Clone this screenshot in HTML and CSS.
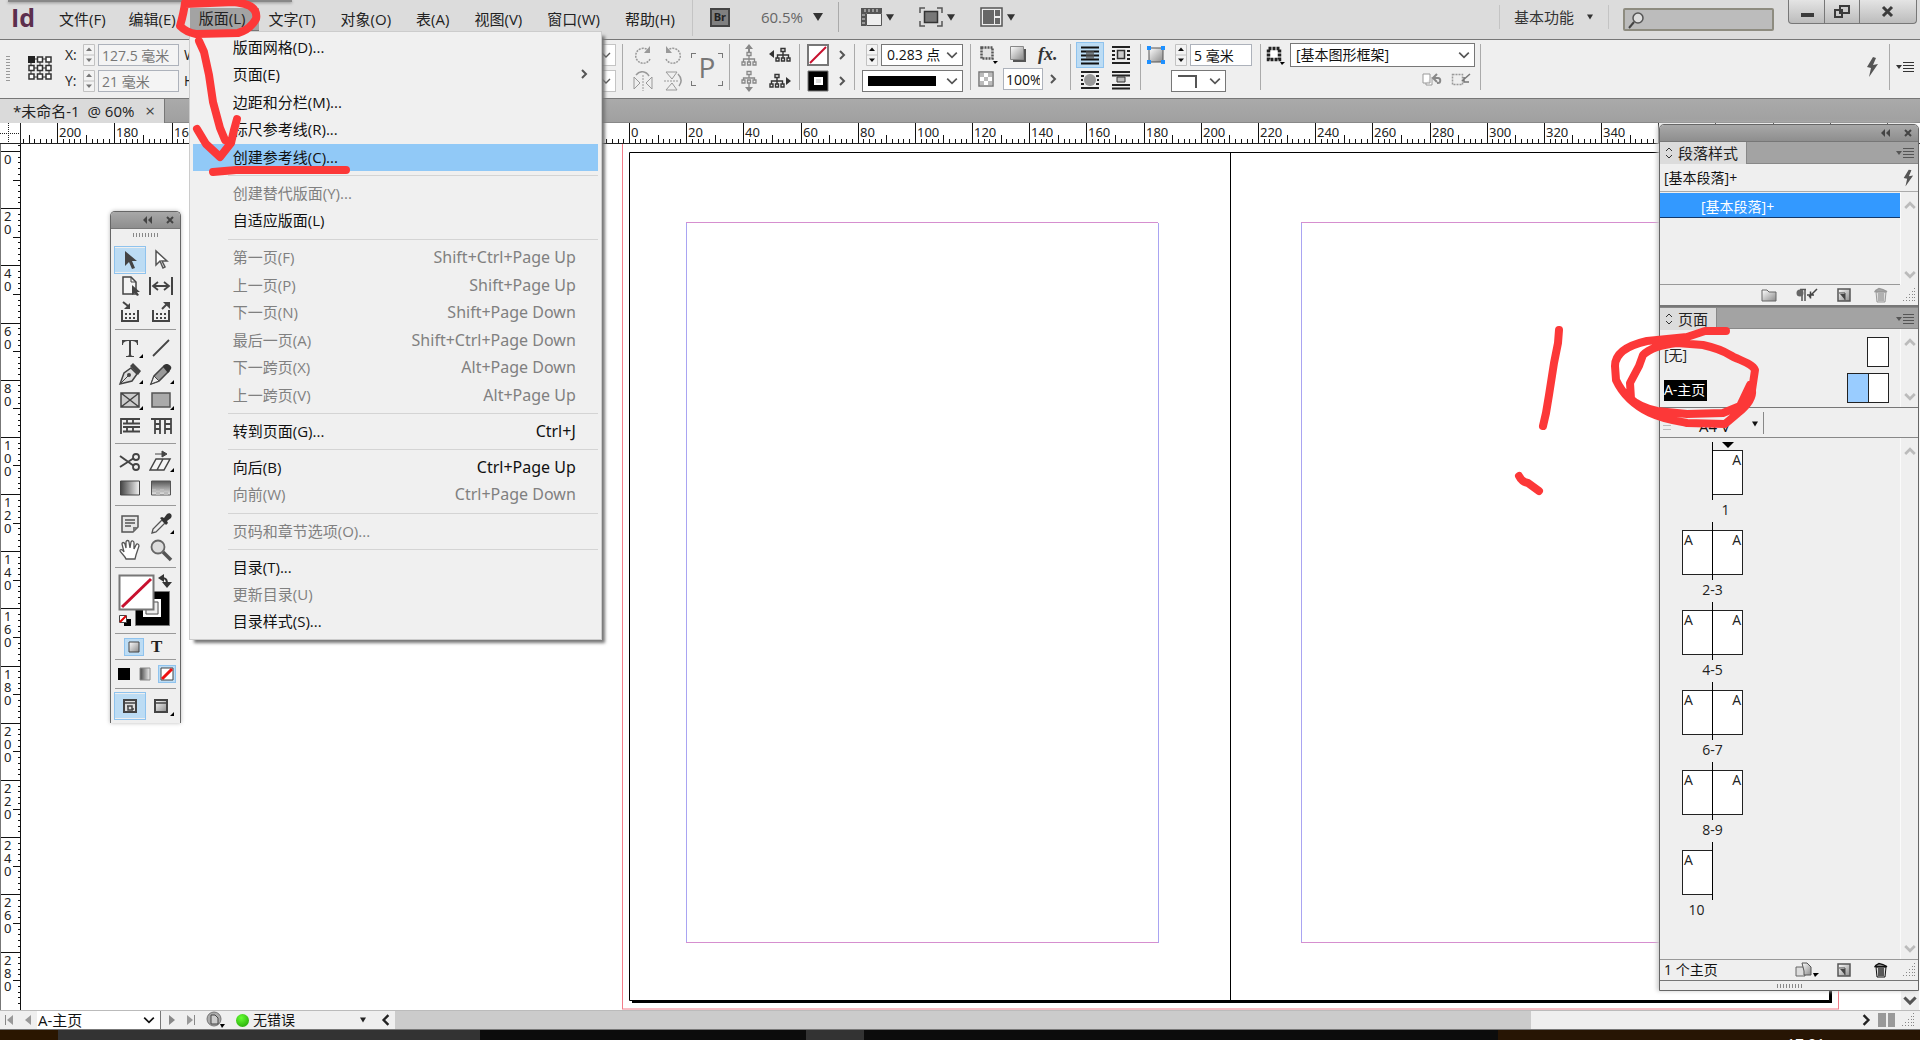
FILE: index.html
```html
<!DOCTYPE html>
<html lang="zh-CN">
<head>
<meta charset="utf-8">
<title>未命名-1 @ 60%</title>
<link rel="stylesheet" href="styles.css">
</head>
<body>
<svg class="defs" aria-hidden="true">
  <defs>
    <linearGradient id="g-h"><stop offset="0" stop-color="#444"/><stop offset="1" stop-color="#f4f4f4"/></linearGradient>
    <linearGradient id="g-v" x2="0" y2="1"><stop offset="0" stop-color="#555"/><stop offset="1" stop-color="#e8e8e8"/></linearGradient>
    <linearGradient id="g-d" x2="1" y2="1"><stop offset="0" stop-color="#fff"/><stop offset="1" stop-color="#8a8a8a"/></linearGradient>
    <symbol id="chev" viewBox="0 0 10 10"><path d="M1 3l4 4 4-4" fill="none" stroke="currentColor" stroke-width="1.4"/></symbol>
    <symbol id="chev-b" viewBox="0 0 10 10"><path d="M1 2.500l4 4 4-4" fill="none" stroke="currentColor" stroke-width="2.200"/></symbol>
    <symbol id="chev-r" viewBox="0 0 10 10"><path d="M3 1l4 4-4 4" fill="none" stroke="currentColor" stroke-width="2"/></symbol>
    <symbol id="tri" viewBox="0 0 10 10"><path d="M0 1h10L5 9z" fill="currentColor"/></symbol>
    <symbol id="pmenu" viewBox="0 0 18 12"><path d="M0 4h6L3 8z" fill="currentColor"/><path d="M7 1.500h11M7 4.500h11M7 7.500h11M7 10.500h11" stroke="currentColor"/></symbol>
    <symbol id="spin" viewBox="0 0 12 22"><path d="M.5.5h11v21H.5zM.5 11h11" fill="#f3f3f3" stroke="#c2c2c2"/><path d="M3 7h6L6 3.500zM3 14.500h6L6 18z" fill="currentColor"/></symbol>
    <symbol id="bolt" viewBox="0 0 14 20"><path d="M8 0L2 10l4 1-2 9 9-13-5 1 3-7z" fill="#555"/></symbol>
    <symbol id="corner" viewBox="0 0 14 14"><g fill="#888"><path d="M12 0h1v1h-1zM10 3h1v1h-1zM12 3h1v1h-1zM7 6h1v1H7zM10 6h1v1h-1zM12 6h1v1h-1zM4 9h1v1H4zM7 9h1v1H7zM10 9h1v1h-1zM12 9h1v1h-1zM1 12h1v1H1zM4 12h1v1H4zM7 12h1v1H7zM10 12h1v1h-1zM12 12h1v1h-1z"/></g></symbol>
    <symbol id="newpg" viewBox="0 0 14 14"><path d="M1 1h12v12H1z" fill="url(#g-d)" stroke="#555" stroke-width="1.500"/><path d="M2 5h6v7" fill="#f4f4f4" stroke="#444"/><path d="M3 6l5 6V6z" fill="#444"/></symbol>
    <symbol id="trash" viewBox="0 0 14 16"><path d="M2 5h10l-1 10H3z" fill="#ddd" stroke="currentColor"/><path d="M1 4.500c1-2 3-2 4-3l4 1 4 2zM5 6v8M7 6v8M9 6v8" fill="#aaa" stroke="currentColor" stroke-width="1.300"/></symbol>
    <symbol id="tree-v" viewBox="0 0 16 22"><path d="M8 0l4 5H4zM7 5h2v4H7z" fill="currentColor"/><path d="M6 8.500h4v3H6zM8 12v3M2.500 18v-3h11v3M8 15v3M1 18h3v3H1zM6.500 18h3v3h-3zM12 18h3v3h-3z" fill="none" stroke="currentColor" stroke-width="1.300"/></symbol>
    <symbol id="tree-h" viewBox="0 0 22 16"><path d="M0 7l5-4v8z" fill="currentColor"/><path d="M12 1.500h4v3h-4zM14 5v3M8.500 11V8h11v3M14 8v3M7 11h3v3H7zM12.500 11h3v3h-3zM18 11h3v3h-3z" fill="none" stroke="currentColor" stroke-width="1.400"/></symbol>
    <symbol id="i-frame" viewBox="0 0 20 20"><path d="M3.500 3.500h11v11h-11z" fill="#e4e4e4" stroke="#555" stroke-width="2.500" stroke-dasharray="2 1"/><path d="M15 17h5l-3 3z" fill="#000"/></symbol>
  </defs>
</svg>

<header class="menubar">
  <div class="peek"></div>
  <span class="logo">Id</span>
  <nav class="menus">
    <div class="menu"><button>文件(F)</button></div>
    <div class="menu"><button>编辑(E)</button></div>
    <div class="menu"><button class="open">版面(L)</button>
      <ul class="dropdown">
        <li><button>版面网格(D)...</button></li>
        <li><button>页面(E)<svg class="s10 sub"><use href="#chev-r"/></svg></button></li>
        <li><button>边距和分栏(M)...</button></li>
        <li><button>标尺参考线(R)...</button></li>
        <li><button class="hot">创建参考线(C)...</button></li>
        <li class="sep"></li>
        <li><button disabled>创建替代版面(Y)...</button></li>
        <li><button>自适应版面(L)</button></li>
        <li class="sep"></li>
        <li><button disabled>第一页(F)<kbd>Shift+Ctrl+Page Up</kbd></button></li>
        <li><button disabled>上一页(P)<kbd>Shift+Page Up</kbd></button></li>
        <li><button disabled>下一页(N)<kbd>Shift+Page Down</kbd></button></li>
        <li><button disabled>最后一页(A)<kbd>Shift+Ctrl+Page Down</kbd></button></li>
        <li><button disabled>下一跨页(X)<kbd>Alt+Page Down</kbd></button></li>
        <li><button disabled>上一跨页(V)<kbd>Alt+Page Up</kbd></button></li>
        <li class="sep"></li>
        <li><button>转到页面(G)...<kbd>Ctrl+J</kbd></button></li>
        <li class="sep"></li>
        <li><button>向后(B)<kbd>Ctrl+Page Up</kbd></button></li>
        <li><button disabled>向前(W)<kbd>Ctrl+Page Down</kbd></button></li>
        <li class="sep"></li>
        <li><button disabled>页码和章节选项(O)...</button></li>
        <li class="sep"></li>
        <li><button>目录(T)...</button></li>
        <li><button disabled>更新目录(U)</button></li>
        <li><button>目录样式(S)...</button></li>
      </ul>
    </div>
    <div class="menu"><button>文字(T)</button></div>
    <div class="menu"><button>对象(O)</button></div>
    <div class="menu"><button>表(A)</button></div>
    <div class="menu"><button>视图(V)</button></div>
    <div class="menu"><button>窗口(W)</button></div>
    <div class="menu"><button>帮助(H)</button></div>
  </nav>
  <div class="appbar">
    <button class="bridge">Br</button>
    <button class="zoom">60.5%<svg class="s10"><use href="#tri"/></svg></button>
    <span class="vsep"></span>
    <button class="view" aria-label="视图选项"><svg width="22" height="20"><path d="M1 1h21v5H6v13H1z" fill="#555"/><path d="M5 2v3M9 2v3M13 2v3M17 2v3M2 8h3M2 12h3M2 16h3" stroke="#ddd"/><path d="M6.500 6.500h15v12h-15z" fill="#eee" stroke="#555"/></svg><svg class="s8"><use href="#tri"/></svg></button>
    <button class="view" aria-label="屏幕模式"><svg width="24" height="20"><path d="M1 6V1h5M18 1h5v5M23 14v5h-5M6 19H1v-5" fill="none" stroke="#555" stroke-width="1.500"/><path d="M5.500 4.500h13v11h-13z" fill="#777" stroke="#333" stroke-width="1.500"/></svg><svg class="s8"><use href="#tri"/></svg></button>
    <button class="view" aria-label="排列文档"><svg width="23" height="20"><path d="M1 1h21v18H1z" fill="#eee" stroke="#555" stroke-width="1.500"/><path d="M3 3h11v14H3zM15 3h5v6h-5zM15 11h5v6h-5z" fill="#666"/></svg><svg class="s8"><use href="#tri"/></svg></button>
  </div>
  <div class="right">
    <button class="workspace-pick">基本功能<svg class="s6"><use href="#tri"/></svg></button>
    <div class="search"><svg width="18" height="18"><circle cx="11" cy="7" r="5" fill="#ddd" stroke="#555" stroke-width="1.500"/><path d="M7 11l-5 6" stroke="#444" stroke-width="2"/></svg><input type="search" aria-label="搜索"></div>
    <div class="winbtns">
      <button aria-label="最小化"><svg width="14" height="14"><path d="M1 8h13v4H1z" fill="#3b3b3b"/></svg></button>
      <button aria-label="还原"><svg width="16" height="14"><path d="M6 1h9v7H6zM1 5h7v7H1z" fill="#ccc" stroke="#3b3b3b" stroke-width="2"/></svg></button>
      <button aria-label="关闭"><svg width="14" height="14"><path d="M2 2l9 9M11 2l-9 9" stroke="#3b3b3b" stroke-width="3"/></svg></button>
    </div>
  </div>
</header>

<section class="control">
  <div class="grip-v"></div>
  <svg class="refpt" width="24" height="24"><path d="M3 3h18v18H3zM12 3v18M3 12h18" fill="none" stroke="#333"/><g fill="#fff" stroke="#333" stroke-width="1.500"><path d="M9.500 1h5v5h-5zM18 1h5v5h-5zM1 9.500h5v5H1zM9.500 9.500h5v5h-5zM18 9.500h5v5h-5zM1 18h5v5H1zM9.500 18h5v5h-5zM18 18h5v5h-5z"/></g><path d="M0 0h7v7H0z" fill="#222"/></svg>
  <div class="rows xy">
    <div class="row"><label for="fx">X:</label><svg class="spin dim"><use href="#spin"/></svg><input id="fx" class="dim" value="127.5 毫米"></div>
    <div class="row"><label for="fy">Y:</label><svg class="spin dim"><use href="#spin"/></svg><input id="fy" class="dim" value="21 毫米"></div>
  </div>
  <div class="rows wh">
    <div class="row"><span>W:</span><button class="combo dim" aria-label="X 缩放"><svg class="s10"><use href="#chev"/></svg></button></div>
    <div class="row"><span>H:</span><button class="combo dim" aria-label="Y 缩放"><svg class="s10"><use href="#chev"/></svg></button></div>
  </div>
  <div class="group rot">
    <div class="rows">
      <div class="row"><svg width="20" height="20"><path d="M17 14A7.500 7.500 0 1 1 15 5" fill="none" stroke="#999" stroke-width="1.500" stroke-dasharray="2 1"/><path d="M17 1v7h-6z" fill="#999"/></svg><svg width="20" height="20"><path d="M3 14A7.500 7.500 0 1 0 5 5" fill="none" stroke="#999" stroke-width="1.500" stroke-dasharray="2 1"/><path d="M3 1v7h6z" fill="#999"/></svg></div>
      <div class="row"><svg width="20" height="20"><path d="M1 6l6 6-6 6zM19 6l-6 6 6 6z" fill="none" stroke="#999"/><path d="M10 4v16" stroke="#999" stroke-dasharray="2 1"/><path d="M3 4c4-5 10-4 13 1" fill="none" stroke="#999" stroke-width="1.500"/></svg><svg width="20" height="20"><path d="M3 1h11L9 8zM3 19h11L9 12z" fill="none" stroke="#999"/><path d="M1 10h15" stroke="#999" stroke-dasharray="2 1"/><path d="M15 3c4 4 4 8 1 12" fill="none" stroke="#999" stroke-width="1.500"/></svg></div>
    </div>
    <span class="pmark">P</span>
  </div>
  <div class="group tree rows">
    <div class="row"><svg class="gray" width="16" height="22"><use href="#tree-v"/></svg><svg width="22" height="16"><use href="#tree-h"/></svg></div>
    <div class="row"><svg class="gray" width="16" height="22"><path d="M8 22l4-5H4z" fill="#888"/><path d="M6 1.500h4v3H6zM8 5v3M2.500 10V8h11v2M1 10h3v3H1zM6.500 10h3v3h-3zM12 10h3v3h-3zM8 13v4" fill="none" stroke="#888" stroke-width="1.300"/></svg><svg width="22" height="16"><path d="M22 8l-5-4v8z" fill="#333"/><path d="M6 1.500h4v3H6zM8 5v3M2.500 11V8h11v3M8 8v3M1 11h3v3H1zM6.500 11h3v3h-3zM12 11h3v3h-3z" fill="none" stroke="#333" stroke-width="1.400"/></svg></div>
  </div>
  <div class="group paint rows">
    <div class="row"><svg width="22" height="22"><path d="M1 1h20v20H1z" fill="#fff" stroke="#777" stroke-width="2"/><path d="M3 19L19 3" stroke="#c8102e" stroke-width="2"/></svg><svg class="s10"><use href="#chev-r"/></svg></div>
    <div class="row"><svg width="22" height="22"><path d="M1 1h20v20H1z" stroke="#777" stroke-width="1"/><path d="M8 8h7v6H8z" fill="#ddd" stroke="#fff" stroke-width="2"/></svg><svg class="s10"><use href="#chev-r"/></svg></div>
  </div>
  <div class="group weight rows">
    <div class="row end"><svg class="spin"><use href="#spin"/></svg><button class="combo w82">0.283 点<svg class="s12"><use href="#chev"/></svg></button></div>
    <div class="row end"><button class="combo w100" aria-label="描边类型"><span class="stroke-bar"></span><svg class="s12"><use href="#chev"/></svg></button></div>
  </div>
  <div class="group fxs rows">
    <div class="row"><svg width="20" height="20"><use href="#i-frame"/></svg><svg width="18" height="18"><path d="M4 4h13v13H4z" fill="#555"/><path d="M1.500 1.500h13v13h-13z" fill="url(#g-d)" stroke="#888"/></svg><span class="fx">fx.</span></div>
    <div class="row"><svg width="16" height="16"><path d="M1 1h14v14H1z" fill="#fff" stroke="#777" stroke-width="1.500"/><path d="M2 2h4v4H2zM10 2h4v4h-4zM6 6h4v4H6zM2 10h4v4H2zM10 10h4v4h-4z" fill="#bbb"/></svg><input class="w40" aria-label="不透明度" value="100%"><svg class="s10"><use href="#chev-r"/></svg></div>
  </div>
  <div class="group wrap rows">
    <div class="row"><svg class="on" width="26" height="24"><path d="M4 4.500h18M4 8.500h18M4 12.500h18M4 16.500h18M4 20.500h18" stroke="#111" stroke-width="2"/><path d="M9 8h8v8H9z" fill="#555" opacity=".7"/></svg><svg width="20" height="20"><path d="M1 2h18M1 18h18M1 6h3M1 10h3M1 14h3M16 6h3M16 10h3M16 14h3" stroke="#222" stroke-width="2"/><path d="M6.500 5.500h7v8h-7z" fill="#ccc" stroke="#333" stroke-width="1.500"/></svg></div>
    <div class="row"><svg width="26" height="20"><path d="M4 2h18M4 18h18M4 6h3M4 10h2M4 14h3M19 6h3M20 10h2M19 14h3" stroke="#222" stroke-width="2"/><circle cx="13" cy="10" r="6" fill="#999"/></svg><svg width="20" height="20"><path d="M1 2h18M1 5.500h18M1 15h18M1 18.500h18" stroke="#222" stroke-width="2"/><path d="M6 7h8v5H6z" fill="#bbb" stroke="#333"/></svg></div>
  </div>
  <div class="group corners rows">
    <div class="row"><svg width="20" height="20"><path d="M3 3h14v14H3z" fill="url(#g-d)" stroke="#555"/><path d="M1 1h4v4H1zM15 1h4v4h-4zM1 15h4v4H1zM15 15h4v4h-4z" fill="#1e90ff"/></svg><svg class="spin"><use href="#spin"/></svg><input class="w62" aria-label="转角大小" value="5 毫米"></div>
    <div class="row"><button class="combo w54" aria-label="转角形状"><svg width="20" height="14"><path d="M0 2h18v12" fill="none" stroke="#555" stroke-width="2"/></svg><svg class="s12"><use href="#chev"/></svg></button></div>
  </div>
  <div class="group style rows">
    <div class="row"><svg width="20" height="20"><path d="M3.500 3.500h11v11h-11z" fill="#fff" stroke="#222" stroke-width="3.500" stroke-dasharray="3 1"/><path d="M15 17h5l-3 3z"/></svg><button class="combo w186">[基本图形框架]<svg class="s12"><use href="#chev"/></svg></button></div>
    <div class="row end"><svg width="20" height="16"><path d="M1 2h7v9H1zM4 11v2h6V5" fill="#fff" stroke="#999"/><path d="M12 6h4c3 0 3 5 0 5h-1M15 2l-4 4 4 4" fill="none" stroke="#888" stroke-width="2"/></svg><svg width="20" height="16"><path d="M1.500 2.500h10v10h-10z" fill="#eee" stroke="#999" stroke-dasharray="2 1" stroke-width="1.500"/><path d="M19 2l-8 7M13 5v5h5" stroke="#777" stroke-width="1.500" fill="none"/></svg></div>
  </div>
  <div class="group tail"><svg width="14" height="20"><use href="#bolt"/></svg><span class="vsep"></span><button aria-label="面板菜单"><svg width="18" height="12"><use href="#pmenu"/></svg></button></div>
</section>

<div class="tabs"><div class="tab">*未命名-1 &nbsp;@ 60%<button aria-label="关闭标签">×</button></div></div>

<main class="workspace">
  <svg class="origin" width="21" height="20"><path d="M0 10.500h21M8.500 0v20" stroke="#222" stroke-dasharray="1 1"/></svg>
  <svg class="ruler-h" id="rh"></svg>
  <svg class="ruler-v" id="rv"></svg>
  <div class="canvas">
    <svg class="spread">
      <rect x="601.500" y="-2" width="1216" height="867" fill="none" stroke="#f27b88"/>
      <path d="M611 11h1200v848H611z"/>
      <path d="M608.500 8.500h1200v848h-1200z" fill="#fff" stroke="#000"/>
      <path d="M1209.500 8v848" stroke="#000"/>
      <path d="M665.500 79v720M1137.500 79v720M1280.500 79v720" stroke="#a9a4f2"/>
      <path d="M665 78.500h472M665 798.500h472M1280 78.500h472M1280 798.500h472" stroke="#d68fcf"/>
    </svg>
    <div class="vscroll"><svg class="s14"><use href="#chev-b"/></svg></div>
  </div>
</main>

<footer class="status">
  <button aria-label="首页"><svg width="10" height="12"><path d="M1.500 1v10" stroke="#888"/><path d="M9 1v10L3 6z" fill="#999"/></svg></button>
  <button aria-label="上一页"><svg width="8" height="12"><path d="M7 1v10L1 6z" fill="#999"/></svg></button>
  <button class="page-pick">A-主页<svg class="s12"><use href="#chev"/></svg></button>
  <button aria-label="下一页"><svg width="8" height="12"><path d="M1 1v10l6-5z" fill="#888"/></svg></button>
  <button aria-label="末页"><svg width="10" height="12"><path d="M8.500 1v10" stroke="#888"/><path d="M1 1v10l6-5z" fill="#999"/></svg></button>
  <button aria-label="打开"><svg width="20" height="18"><circle cx="8" cy="8" r="7" fill="#aaa" stroke="#777"/><path d="M5 4h4l3 3v6H5z" fill="#ccc" stroke="#444"/><path d="M14 13h5l-3 4z"/></svg></button>
  <span class="preflight"><i></i>无错误</span>
  <button class="pf" aria-label="印前检查菜单"><svg class="s6"><use href="#tri"/></svg></button>
  <button aria-label="向左滚动"><svg class="s12 flip"><use href="#chev-r"/></svg></button>
  <div class="hscroll"><div class="thumb"></div></div>
  <button aria-label="向右滚动"><svg class="s12"><use href="#chev-r"/></svg></button>
  <span class="split"></span>
  <svg width="14" height="14"><use href="#corner"/></svg>
</footer>
<div class="taskbar"><span class="t1"></span><span class="t2"></span><span class="t3"></span><span class="t4"></span><span class="t5"></span><span class="t6"><time>17:01</time></span></div>

<aside class="tools">
  <div class="bar"><svg width="10" height="8"><path d="M4 0v8L0 4zM9 0v8L5 4z" fill="#444"/></svg><svg width="8" height="8"><path d="M1 1l6 6M7 1L1 7" stroke="#444" stroke-width="2"/></svg></div>
  <div class="grip-h"></div>
  <div class="grid">
    <button class="on" aria-label="选择"><svg viewBox="0 0 24 24"><path d="M7 3v15l4-4 3 7 3-1-3-7h5z" fill="#444"/></svg></button>
    <button aria-label="直接选择"><svg viewBox="0 0 24 24"><path d="M7 3v14l4-4 3 7 2-1-3-6h5z" fill="#fff" stroke="#555" stroke-width="1.500"/></svg></button>
    <button aria-label="页面"><svg viewBox="0 0 24 24"><path d="M5 3h8l5 5v12H5z" fill="#f4f4f4" stroke="#444" stroke-width="1.500"/><path d="M13 3v5h5" fill="none" stroke="#444"/><path d="M14 11v10l3-2 2 3 2-1-2-3h3z" fill="#444"/></svg></button>
    <button aria-label="间隙"><svg viewBox="0 0 24 24"><path d="M1 3v18M23 3v18" stroke="#444" stroke-width="2"/><path d="M4 12h16M9 8l-5 4 5 4M15 8l5 4-5 4" fill="none" stroke="#444" stroke-width="1.800"/></svg></button>
    <button aria-label="内容收集器"><svg viewBox="0 0 24 24"><path d="M4 10v11h16V10" fill="none" stroke="#444" stroke-width="2"/><path d="M7 14h10M7 18h10" stroke="#444" stroke-width="2" stroke-dasharray="2 2"/><path d="M5 2l5 4" stroke="#444" stroke-width="2"/><path d="M12 3v6H6z" fill="#444"/></svg></button>
    <button aria-label="内容置入器"><svg viewBox="0 0 24 24"><path d="M4 10v11h16V10" fill="none" stroke="#444" stroke-width="2"/><path d="M7 14h10M7 18h10" stroke="#444" stroke-width="2" stroke-dasharray="2 2"/><path d="M13 9l5-5" stroke="#444" stroke-width="2"/><path d="M14 2h7v7z" fill="#444"/></svg></button>
    <hr>
    <button class="more" aria-label="文字"><svg viewBox="0 0 24 24"><path d="M4 4h16v5h-1c0-3-2-4-6-4v13c0 2 1 2 3 2v1H8v-1c2 0 3 0 3-2V5C7 5 5 6 5 9H4z" fill="#444"/></svg></button>
    <button aria-label="直线"><svg viewBox="0 0 24 24"><path d="M4 20L20 4" stroke="#444" stroke-width="1.800"/></svg></button>
    <button class="more" aria-label="钢笔"><svg viewBox="0 0 24 24"><path d="M2 22l4-11 7-5 6 6-5 7z" fill="#ddd" stroke="#444" stroke-width="1.500"/><path d="M12 4l3-3 8 8-3 4z" fill="#444"/><path d="M2 22l8-8" stroke="#444"/><circle cx="11" cy="13" r="2" fill="#444"/></svg></button>
    <button class="more" aria-label="铅笔"><svg viewBox="0 0 24 24"><path d="M2 22l3-8L15 4l5 5L10 19z" fill="#999" stroke="#444" stroke-width="1.500"/><path d="M5 14l5 5-8 3z" fill="#eee" stroke="#444"/><path d="M14 5c1-6 10-2 8 2l-3 4z" fill="#333"/></svg></button>
    <button class="more" aria-label="矩形框架"><svg viewBox="0 0 24 24"><path d="M3 5h18v14H3zM3 5l18 14M21 5L3 19" fill="#ccc" stroke="#444" stroke-width="1.500"/></svg></button>
    <button class="more" aria-label="矩形"><svg viewBox="0 0 24 24"><path d="M3 5h18v14H3z" fill="#aaa" stroke="#555" stroke-width="1.500"/></svg></button>
    <button aria-label="水平网格"><svg viewBox="0 0 24 24"><path d="M3 20V5h19M5 9.500h17M5 13h17M5 17.500h17M9 5v4M15 5v4M9 13v4M15 13v4" fill="none" stroke="#444" stroke-width="1.800"/></svg></button>
    <button aria-label="垂直网格"><svg viewBox="0 0 24 24"><path d="M2 5h20v15M6 5v15M11 5v15M16 5v15M6 10h5M6 15h5M16 10h6M16 15h6" fill="none" stroke="#444" stroke-width="1.800"/></svg></button>
    <hr>
    <button aria-label="剪刀"><svg viewBox="0 0 24 24"><path d="M2 6l14 10M2 17L16 8" stroke="#444" stroke-width="2"/><circle cx="18" cy="7" r="3" fill="none" stroke="#444" stroke-width="1.800"/><circle cx="18" cy="17" r="3" fill="none" stroke="#444" stroke-width="1.800"/></svg></button>
    <button class="more" aria-label="自由变换"><svg viewBox="0 0 24 24"><path d="M1 20L7 9h14l-6 11zM8 20L14 9" fill="#f4f4f4" stroke="#444" stroke-width="1.500"/><path d="M6 4h8M13 1l5 3-5 3z" fill="#444" stroke="#444"/></svg></button>
    <button aria-label="渐变色板"><svg viewBox="0 0 24 24"><path d="M2.500 5h19v14h-19z" fill="url(#g-h)" stroke="#444"/></svg></button>
    <button aria-label="渐变羽化"><svg viewBox="0 0 24 24"><path d="M2.500 5h19v14h-19z" fill="url(#g-v)" stroke="#555"/><path d="M3 13h4v3H3zM11 13h4v3h-4zM7 16h4v3H7zM15 16h4v3h-4z" fill="#bbb"/></svg></button>
    <hr>
    <button aria-label="附注"><svg viewBox="0 0 24 24"><path d="M4 4h16v11l-5 5H4z" fill="#e6e6e6" stroke="#555" stroke-width="1.500"/><path d="M7 8h10M7 11h10M7 14h6" stroke="#555" stroke-width="1.500"/><path d="M15 20v-5h5z" fill="#777"/></svg></button>
    <button class="more" aria-label="吸管"><svg viewBox="0 0 24 24"><path d="M3 21l1-4L13 8l3 3-9 9z" fill="#eee" stroke="#555" stroke-width="1.300"/><path d="M11 6l2-1 2 1 3-4c3-2 6 1 4 4l-4 3 1 2-2 2z" fill="#333"/></svg></button>
    <button aria-label="抓手"><svg viewBox="0 0 24 24"><path d="M8 21c-1-3-4-5-6-8 0-2 2-2 4 1L4 6c0-2 2-2 3 0l1 4V4c0-2 3-2 3 0l1 6 1-6c1-2 3-1 3 1v6l2-4c1-2 3-1 3 1l-3 9-1 4z" fill="#fff" stroke="#555" stroke-width="1.300"/></svg></button>
    <button aria-label="缩放"><svg viewBox="0 0 24 24"><circle cx="9" cy="9" r="6.500" fill="#ddd" stroke="#666" stroke-width="1.800"/><path d="M14 14l8 8" stroke="#555" stroke-width="3.500"/></svg></button>
    <hr>
  </div>
  <svg class="swatch" width="56" height="60"><path d="M17.500 18.500h34v34h-34z" fill="#000" stroke="#777"/><path d="M26 27h16v16H26z" fill="#eee" stroke="#fff" stroke-width="2"/><path d="M28 29h12v12H28z" fill="#eee" stroke="#555"/><path d="M1.500 2.500h34v34h-34z" fill="#fff" stroke="#777" stroke-width="2"/><path d="M4 34L33 6" stroke="#c8102e" stroke-width="3"/><path d="M44 5c5 0 5 3 5 7" fill="none" stroke="#333" stroke-width="2"/><path d="M46 1l-6 4 6 4zM44 9h10l-5 6z" fill="#333"/><path d="M6 46h7v7H6z"/><path d="M1.500 42.500h7v7h-7z" fill="#fff" stroke="#444"/><path d="M2 49l6-6" stroke="#d00" stroke-width="2"/></svg>
  <hr>
  <div class="pair"><button class="on" aria-label="格式针对容器"><svg width="18" height="16"><path d="M4 3h10v10H4z" fill="url(#g-d)" stroke="#444"/></svg></button><button class="tt">T</button></div>
  <hr>
  <div class="pair three"><button aria-label="应用颜色"><svg width="14" height="14"><path d="M1 1h12v12H1z"/></svg></button><button aria-label="应用渐变"><svg width="14" height="14"><path d="M2 1h10v12H2z" fill="url(#g-h)" stroke="#888"/></svg></button><button class="on" aria-label="应用无"><svg width="16" height="16"><path d="M2 2h12v12H2z" fill="#fff" stroke="#444"/><path d="M3 13L13 3" stroke="#e11" stroke-width="3"/></svg></button></div>
  <hr>
  <div class="grid last"><button class="on" aria-label="正常"><svg viewBox="0 0 24 24"><path d="M6 6h12v12H6z" fill="#ddd" stroke="#444" stroke-width="2"/><path d="M6 9h12M9 12h5v3h2M15 16h-5v-4" stroke="#444" stroke-width="1.500" fill="none"/></svg></button><button class="more" aria-label="预览"><svg viewBox="0 0 24 24"><path d="M6 6h12v12H6z" fill="url(#g-d)" stroke="#444" stroke-width="2"/><path d="M6 9h12" stroke="#444" stroke-width="1.500"/></svg></button></div>
</aside>

<aside class="panels">
  <div class="bar"><svg width="10" height="8"><path d="M4 0v8L0 4zM9 0v8L5 4z" fill="#444"/></svg><svg width="8" height="8"><path d="M1 1l6 6M7 1L1 7" stroke="#444" stroke-width="2"/></svg></div>
  <div class="ptabs"><span class="ptab"><svg width="8" height="12"><path d="M1 4l3-3 3 3M1 8l3 3 3-3" fill="none" stroke="#333"/></svg>段落样式</span><svg width="18" height="12"><use href="#pmenu"/></svg></div>
  <div class="current"><span>[基本段落]+</span><svg width="12" height="18" viewBox="0 0 14 20"><use href="#bolt"/></svg></div>
  <div class="list styles"><div class="body"><button class="sel">[基本段落]+</button></div><div class="sb"><svg class="s12 up"><use href="#chev-b"/></svg><svg class="s12"><use href="#chev-b"/></svg></div></div>
  <div class="pfoot">
    <svg width="16" height="14"><path d="M1 2h5l2 2h7v9H1z" fill="url(#g-d)" stroke="#666"/></svg>
    <svg width="24" height="14"><path d="M7 2v11M10 2v11M11 1.500H5" stroke="#555" stroke-width="1.500"/><circle cx="5" cy="5" r="3.500" fill="#666"/><path d="M12 7h7M15.500 3.500v7M22 1l-8 8" stroke="#444" stroke-width="1.500"/></svg>
    <svg width="14" height="14"><use href="#newpg"/></svg>
    <svg class="gray bin" width="14" height="16"><use href="#trash"/></svg>
    <svg width="14" height="14"><use href="#corner"/></svg>
  </div>
  <div class="ptabs second"><span class="ptab"><svg width="8" height="12"><path d="M1 4l3-3 3 3M1 8l3 3 3-3" fill="none" stroke="#333"/></svg>页面</span><svg width="18" height="12"><use href="#pmenu"/></svg></div>
  <div class="list masters"><div class="body">
      <div class="master"><span>[无]</span><i class="pg"></i></div>
      <div class="master"><span class="inv">A-主页</span><i class="pg blue"></i><i class="pg"></i></div>
    </div><div class="sb"><svg class="s12 up"><use href="#chev-b"/></svg><svg class="s12"><use href="#chev-b"/></svg></div></div>
  <div class="layoutrow"><span class="lines"></span><button>A4 V<svg class="s6"><use href="#tri"/></svg></button></div>
  <div class="list pages"><div class="body">
      <figure class="first"><div class="sp"><b class="none"></b><b class="r">A</b></div><figcaption>1</figcaption></figure>
      <figure><div class="sp"><b>A</b><b class="r">A</b></div><figcaption>2-3</figcaption></figure>
      <figure><div class="sp"><b>A</b><b class="r">A</b></div><figcaption>4-5</figcaption></figure>
      <figure><div class="sp"><b>A</b><b class="r">A</b></div><figcaption>6-7</figcaption></figure>
      <figure><div class="sp"><b>A</b><b class="r">A</b></div><figcaption>8-9</figcaption></figure>
      <figure class="final"><div class="sp"><b>A</b><b class="none"></b></div><figcaption>10</figcaption></figure>
    </div><div class="sb"><svg class="s12 up"><use href="#chev-b"/></svg><svg class="s12"><use href="#chev-b"/></svg></div></div>
  <div class="pfoot bottom"><span>1 个主页</span>
    <svg width="24" height="16"><path d="M1 5h9v9H1z" fill="#ddd" stroke="#666"/><path d="M7 1h5l4 4v8H9V9z" fill="url(#g-d)" stroke="#555"/><path d="M18 11h6l-4 4z"/></svg>
    <svg width="14" height="14"><use href="#newpg"/></svg>
    <svg class="bin" width="14" height="16"><use href="#trash"/></svg>
    <svg width="14" height="14"><use href="#corner"/></svg>
  </div>
  <div class="resize"><div class="grip-h"></div></div>
</aside>

<svg class="ink" aria-hidden="true">
  <path d="M185 3C184 12 182 19 180 26C184 30 190 33 196 34L238 33C246 31 252 26 256 19C257 14 255 9 250 6C244 3 240 3 234 2L185 4"/>
  <path d="M199 41L204 52L209 75L213 102L220 128L225 140M197 129L206 144L220 157L231 143L234 130L237 119"/>
  <path d="M213 172L236 170L346 170"/>
  <path d="M1559 330L1558 343L1554 363L1549 395L1546 413L1543 426M1519 476Q1522 482 1528 483L1539 491"/>
  <path d="M1726 331L1705 331L1687 337L1647 341C1625 346 1615 355 1615 366L1616 380C1622 393 1632 404 1650 413C1665 420 1678 421 1687 423L1725 424L1738 413C1748 405 1753 398 1752 390L1755 370C1752 363 1738 360 1730 355C1722 350 1712 347 1703 345L1677 343C1660 345 1648 350 1643 355L1639 366L1630 383L1631 399C1637 405 1645 408 1657 411L1687 414L1723 413L1740 406L1750 385"/>
</svg>
<script src="rulers.js"></script>
</body>
</html>
```
FILE: rulers.js
```js
// Document rulers: 2 mm ticks, 10 mm half ticks, 20 mm labelled ticks.
const PX_PER_MM = 2.859;
const NS = 'http://www.w3.org/2000/svg';

function add(svg, x1, y1, x2, y2) {
  const p = document.createElementNS(NS, 'path');
  p.setAttribute('d', `M${x1} ${y1}L${x2} ${y2}`);
  svg.appendChild(p);
}
function label(svg, x, y, s) {
  const t = document.createElementNS(NS, 'text');
  t.setAttribute('x', x);
  t.setAttribute('y', y);
  t.textContent = s;
  svg.appendChild(t);
}

const rh = document.getElementById('rh');
const originX = 608;
for (let mm = -212; mm <= 450; mm += 2) {
  const x = Math.round(originX + mm * PX_PER_MM) + 0.5;
  if (mm % 20 === 0) {
    add(rh, x, 0, x, 20);
    // labels between -160 and 0 would lie under the open menu
    if (mm >= 0 && mm < 350 || mm <= -160) label(rh, x + 1.5, 14, Math.abs(mm));
  } else {
    add(rh, x, mm % 10 === 0 ? 12 : 16, x, 20);
  }
}

const rv = document.getElementById('rv');
const originY = 8;
for (let mm = -2; mm <= 298; mm += 2) {
  const y = Math.round(originY + mm * PX_PER_MM) - 0.5;
  if (mm % 20 === 0) {
    add(rv, 0, y, 20, y);
    String(mm).split('').forEach((d, i) => label(rv, 3, y + 12 + i * 13, d));
  } else {
    add(rv, mm % 10 === 0 ? 12 : 17, y, 20, y);
  }
}
```
FILE: styles.css
```css
* { box-sizing: border-box; }
html { height: 100%; overflow: hidden; }
body {
  margin: 0;
  min-height: 100%;
  display: flex;
  flex-direction: column;
  position: relative;
  overflow: hidden;
  background: #fff;
  color: #222;
  font: 15px/20px "Open Sans", "Noto Sans CJK SC", sans-serif;
}
button, input { font: inherit; color: inherit; }
button { border: 0; padding: 0; margin: 0; background: none; display: flex; align-items: center; white-space: nowrap; }
svg { display: block; flex: none; }
hr { margin: 0; border: 0; border-top: 1px solid #999; }
.defs { position: absolute; width: 0; height: 0; }
.s6 { width: 6px; height: 6px; }
.s8 { width: 8px; height: 9px; }
.s10 { width: 10px; height: 10px; }
.s12 { width: 12px; height: 12px; }
.s14 { width: 14px; height: 14px; }
.up, .flip { transform: rotate(180deg); }
.gray { color: #999; }
.vsep { width: 1px; background: #aaa; align-self: stretch; }

/* menu bar */
.menubar { display: flex; height: 40px; background: #dcdcdc; border-bottom: 1px solid #777; position: relative; }
.peek { position: absolute; left: 8px; top: 0; width: 284px; height: 2px; background: #888; box-shadow: 0 1px 3px #888; }
.logo { width: 50px; padding: 7px 0 0 11px; color: #5c2f4d; font: bold 25px/20px "Open Sans", sans-serif; }
.menus { display: flex; align-items: flex-start; padding-top: 8px; }
.menu { position: relative; }
.menu > button { height: 23px; padding: 0 14px 2px 9px; }
.menu:nth-child(n+4) > button { padding-right: 16px; }
.menu > .open { background: #a3a3a3; border-bottom: 1px solid #777; }
.dropdown {
  position: absolute; z-index: 20; left: -1px; top: 23px; width: 413px;
  margin: 0; padding: 2px 3px 4px; list-style: none;
  background: #f0f0f0; border: 1px solid #ccc; box-shadow: 4px 4px 3px -1px #777;
}
.dropdown li { height: 27px; }
.dropdown li:nth-child(even) { height: 28px; }
.dropdown li:nth-child(n+21) { height: 27px; }
.dropdown li.sep.sep { height: 9px; padding-top: 4px; }
.dropdown li.sep::before { content: ""; display: block; margin-left: 35px; border-top: 1px solid #d4d4d4; }
.dropdown button { width: 100%; height: 100%; padding: 0 22px 2px 40px; color: #111; }
.dropdown button:disabled { color: #808080; }
.dropdown .hot { background: #91c9f7; }
kbd { margin-left: auto; font: 16px/20px "Noto Sans", sans-serif; }
.sub { margin-left: auto; margin-right: -13px; color: #555; }
.appbar { display: flex; align-items: center; height: 36px; padding: 2px 0 4px 17px; margin-left: 1px; border-left: 1px solid #c4c4c4; }
.bridge { width: 20px; height: 19px; justify-content: center; background: #808080; border: 2px solid #444; color: #222; font: bold 11px/14px "Open Sans", sans-serif; }
.zoom { margin-left: 31px; gap: 10px; color: #666; font-size: 15px; }
.zoom svg, .view .s8 { color: #333; }
.appbar .vsep { margin: 0 21px 0 15px; }
.view { gap: 4px; margin-right: 25px; }
.right { margin-left: auto; display: flex; align-items: flex-start; padding-right: 3px; }
.workspace-pick { height: 24px; margin: 5px 14px 0 0; padding: 0 15px 0 14px; gap: 13px; color: #333; border: solid #c4c4c4; border-width: 0 1px; }
.search { display: flex; align-items: center; width: 151px; height: 23px; margin: 8px 14px 0 0; padding: 0 2px; background: #bcbcbc; border: 2px solid #8e8c80; border-radius: 2px; }
.search input { min-width: 0; flex: 1; height: 16px; border: 0; background: none; }
.winbtns { display: flex; width: 129px; height: 24px; border: 1px solid #777; border-top: 0; border-radius: 0 0 4px 4px; background: linear-gradient(#e4e4e4, #bcbcbc); }
.winbtns button { width: 35px; justify-content: center; }
.winbtns button + button { border-left: 1px solid #777; }
.winbtns button:last-child { flex: 1; }

/* control panel */
.control { display: flex; height: 59px; background: #efefef; border-bottom: 1px solid #777; padding-top: 4px; font-size: 14px; }
.grip-v { width: 4px; height: 26px; margin: 12px 0 0 6px; background: repeating-linear-gradient(#999 0 1px, transparent 1px 3px); }
.refpt { margin: 12px 0 0 18px; }
.rows { display: flex; flex-direction: column; gap: 4px; height: 48px; }
.row { display: flex; align-items: center; height: 22px; }
.row.end { justify-content: flex-end; }
.xy { margin-left: 13px; }
.xy label { width: 18px; }
.spin { width: 12px; height: 22px; margin-right: 3px; color: #111; }
.spin.dim { color: #777; }
.control input { height: 22px; width: 81px; padding: 0 3px; border: 1px solid #adb2bb; background: #fff; color: #111; }
.control input.dim { color: #777; background: #f4f4f4; }
.control .w40 { width: 40px; margin: 0 5px 0 9px; padding: 0 2px; }
.control .w62 { width: 62px; }
.wh { width: 432px; margin-left: 5px; }
.wh .row { justify-content: space-between; }
.combo { height: 22px; padding: 0 4px 0 5px; border: 1px solid #777; background: #fff; color: #111; justify-content: space-between; }
.combo svg { color: #555; }
.combo.dim { width: 50px; border-color: #c4c4c4; justify-content: flex-end; }
.w82 { width: 82px; }
.w100 { width: 101px; }
.w54 { width: 55px; }
.w186 { width: 186px; height: 24px; }
.stroke-bar { width: 68px; height: 10px; background: #000; }
.group { margin-left: 0; position: relative; border-left: 1px solid #aaa; height: 46px; }
.rot { display: flex; width: 107px; padding-left: 10px; margin-left: 6px; }
.rot .row { gap: 10px; }
.pmark { width: 32px; height: 33px; margin: 9px 0 0 8px; color: #777; font: 28px/28px "Open Sans", sans-serif; text-align: center;
  background: linear-gradient(#777, #777) 0 0/5px 1px, linear-gradient(#777, #777) 0 0/1px 5px, linear-gradient(#777, #777) 100% 0/5px 1px, linear-gradient(#777, #777) 100% 0/1px 5px, linear-gradient(#777, #777) 0 100%/5px 1px, linear-gradient(#777, #777) 0 100%/1px 5px, linear-gradient(#777, #777) 100% 100%/5px 1px, linear-gradient(#777, #777) 100% 100%/1px 5px;
  background-repeat: no-repeat; }
.tree { width: 70px; padding-left: 11px; color: #333; }
.tree .row { gap: 12px; }
.tree .gray { color: #888; }
.paint { width: 55px; padding-left: 7px; color: #555; }
.paint .row { gap: 8px; }
.weight { width: 116px; padding-right: 7px; }
.fxs { width: 100px; padding-left: 7px; color: #555; }
.fxs .row:first-child { gap: 11px; }
.fx { color: #333; font: italic bold 18px/20px "Liberation Serif", serif; }
.wrap { width: 70px; padding-left: 6px; }
.wrap .row { gap: 8px; }
.on { background: #bcdcf4; outline: 1px solid #8fc3ee; }
.corners { width: 120px; padding-left: 5px; }
.corners .spin { margin-left: 9px; }
.corners .combo { margin-left: 25px; padding-left: 6px; }
.style { width: 221px; padding: 0 5px 0 4px; border-right: 1px solid #aaa; }
.style .row { gap: 5px; }
.style .end { gap: 9px; padding-right: 4px; }
.tail { margin-left: auto; display: flex; align-items: center; gap: 10px; border: 0; padding-right: 6px; color: #333; }
.tail button { margin-left: -4px; }

/* document tab */
.tabs { height: 24px; background: linear-gradient(#aaa, #a0a0a0); border-bottom: 1px solid #888; }
.tab { display: flex; align-items: center; width: 165px; height: 24px; padding-left: 13px; background: #dadada; border-right: 1px solid #777; }
.tab button { margin-left: 11px; font-size: 17px; color: #444; }

/* workspace */
.workspace { flex: 1; display: grid; grid-template: 21px minmax(0, 1fr) / 21px minmax(0, 1fr); min-height: 0; }
.origin, .ruler-h { border-bottom: 1px solid #222; height: 21px; }
.ruler-h, .ruler-v { overflow: hidden; stroke: #111; width: 100%; }
.ruler-v { width: 21px; height: 100%; border-right: 1px solid #111; border-left: 1px solid #777; }
.origin { border-right: 1px solid #222; }
.ruler-h text, .ruler-v text { stroke: none; fill: #222; font: 13px "Noto Sans", sans-serif; }
.canvas { position: relative; overflow: hidden; background: #fff; }
.spread { position: absolute; inset: 0; width: 100%; height: 100%; }
.vscroll { position: absolute; right: 1px; top: 0; bottom: 0; width: 18px; display: flex; align-items: flex-end; padding: 0 2px 2px; background: #efefef; color: #555; }

/* status bar and taskbar */
.status { display: flex; align-items: center; height: 20px; padding: 0 5px 0 4px; background: #efefef; border-top: 1px solid #bbb; border-bottom: 1px solid #777; font-size: 14px; }
.status > button { margin-right: 10px; }
.status > .page-pick { width: 124px; height: 18px; margin: 0 7px 0 -5px; padding: 0 5px 0 1px; justify-content: space-between; background: #fff; border-right: 1px solid #777; color: #111; font-size: 15px; }
.preflight { display: flex; align-items: center; gap: 4px; color: #111; }
.preflight i { width: 13px; height: 13px; border-radius: 50%; background: radial-gradient(circle at 40% 30%, #6f3, #1a9a00); }
.status > .pf { margin: 0 14px 0 65px; }
.status > .pf + button { margin-right: 3px; }
.hscroll { flex: 1; margin-right: 8px; }
.thumb { width: 78%; height: 18px; background: #cbcbcb; }
.split { width: 17px; height: 14px; margin: 0 6px 0 -4px; background: linear-gradient(90deg, #999 8px, #efefef 8px 10px, #999 10px); }
.taskbar { display: flex; height: 10px; overflow: hidden; background: #0c0c0c; }
.t1 { width: 3%; background: #2a1600; }
.t2 { width: 22%; background: #333; }
.t3 { width: 17%; background: #0c0c0c; }
.t4 { width: 3%; background: #333; }
.t5 { width: 33%; background: #0c0c0c; }
.t6 { flex: 1; padding: 3px 95px 0 0; background: #271504; text-align: right; color: #fff; font-size: 15px; }

/* shared floating-window parts */
.bar { display: flex; align-items: center; justify-content: flex-end; gap: 13px; height: 17px; padding-right: 6px; background: linear-gradient(#a8a8a8, #8e8e8e); border-bottom: 1px solid #777; border-radius: 4px 4px 0 0; }
.grip-h { width: 25px; height: 4px; margin: 0 auto; background: repeating-linear-gradient(90deg, #888 0 1px, transparent 1px 3px); }

/* tools */
.tools { position: absolute; left: 110px; top: 211px; width: 71px; background: #efefef; border: solid #666; border-width: 1px 1px 0; border-radius: 5px 5px 0 0; box-shadow: 0 0 4px #bbb; }
.tools .grip-h { margin-top: 4px; }
.tools hr { margin: 0 4px; }
.tools .grid { display: grid; grid-template-columns: 30px 30px; column-gap: 1px; padding: 10px 4px 0; }
.tools .grid hr { grid-column: 1 / 3; margin: 4px 0 5px; }
.tools .grid button { height: 26px; justify-content: center; position: relative; background-clip: content-box; padding: 1px 0; }
.grid button svg { width: 24px; height: 24px; }
.more::after { content: ""; position: absolute; right: 2px; bottom: 3px; border: 2px solid #000; border-left-color: transparent; border-top-color: transparent; }
.swatch { margin: 0 auto 0 7px; }
.pair { display: flex; align-items: center; height: 25px; padding-left: 14px; gap: 8px; }
.pair.three { height: 28px; padding: 0 5px 0 6px; gap: 4px; justify-content: space-between; }
.tt { font: bold 17px/18px "Liberation Serif", serif; color: #222; }
.tools .last { padding-top: 4px; height: 34px; }

/* right panels */
.panels { position: absolute; right: 1px; top: 124px; bottom: 49px; width: 260px; display: flex; flex-direction: column; background: #efefef; border: 1px solid #666; border-radius: 5px 5px 0 0; box-shadow: -2px 0 4px #ccc; }
.ptabs { display: flex; justify-content: space-between; height: 22px; padding-right: 4px; background: #a3a3a3; border-bottom: 1px solid #888; color: #555; }
.ptabs > svg { margin-top: 5px; }
.ptab { display: flex; align-items: center; gap: 5px; padding: 0 8px 0 5px; height: 22px; background: #dcdcdc; color: #222; border-right: 1px solid #888; }
.current { display: flex; align-items: center; justify-content: space-between; height: 28px; padding: 0 4px; border-bottom: 1px solid #aaa; font-size: 14px; color: #111; }
.list { display: flex; }
.body { flex: 1; min-width: 0; }
.sb { width: 18px; display: flex; flex-direction: column; justify-content: space-between; padding: 7px 3px 4px; color: #bbb; border-left: 1px solid #fafafa; }
.styles { height: 93px; }
.styles .body { border-bottom: 1px solid #999; }
.styles .sel { width: 100%; height: 26px; padding: 4px 0 0 41px; background: #3399ff; border-top: 1px solid #efefef; border-bottom: 1px solid #14396b; color: #fff; font-size: 14px; }
.pfoot { display: flex; align-items: center; justify-content: flex-end; gap: 18px; height: 22px; padding-right: 2px; border-bottom: 2px solid #777; }
.pfoot svg:last-child { margin-left: -4px; }
.pfoot .bin { margin-left: 5px; }
.pfoot > span { margin-right: auto; padding-left: 4px; }
.second { border-top: 1px solid #888; }
.masters { height: 79px; border-bottom: 1px solid #777; }
.masters .body { padding-top: 2px; }
.master { display: flex; align-items: flex-end; height: 36px; padding: 0 11px 0 4px; font-size: 14px; }
.master span { margin: 0 auto 2px 0; }
.inv { height: 21px; padding-right: 2px; background: #000; color: #fff; }
.pg { width: 22px; height: 30px; background: #fff; border: 1px solid #222; }
.pg + .pg { border-left: 0; width: 20px; }
.pg.blue { background: #99ccff; }
.layoutrow { display: flex; align-items: center; height: 30px; border-bottom: 1px solid #888; padding-left: 3px; }
.lines { width: 8px; height: 9px; margin-top: 6px; background: repeating-linear-gradient(#bbb 0 1px, transparent 1px 4px); }
.layoutrow button { width: 93px; height: 22px; padding: 6px 5px 0 28px; justify-content: space-between; border-right: 1px solid #888; color: #111; font-size: 15px; }
.layoutrow svg { margin-bottom: 4px; }
.pages { flex: 1; min-height: 0; border-bottom: 1px solid #999; }
.pages .body { padding: 4px 0 0 22px; }
figure { margin: 0; width: 61px; height: 80px; position: relative; }
.sp { display: flex; padding-top: 8px; }
.sp b { flex: 1; height: 45px; background: #fff; border: 1px solid #222; padding: 0 1px; font-weight: 400; font-size: 14px; line-height: 18px; color: #222; }
.sp b.r { text-align: right; border-left: 0; }
.sp b.none { background: none; border-color: transparent; color: transparent; }
figure::before { content: ""; position: absolute; left: 30px; top: 0; height: 58px; border-left: 1px solid #000; }
.first::after { content: ""; position: absolute; left: 40px; top: 0; border: 6px solid transparent; border-top-color: #000; border-bottom: 0; }
figcaption { padding-top: 5px; text-align: center; font-size: 14px; }
.first figcaption { padding-left: 26px; }
.final figcaption { padding-right: 32px; }
.bottom { height: 21px; border-bottom: 1px solid #777; font-size: 14px; color: #111; }
.resize { height: 9px; padding-top: 3px; }

/* marker strokes over the whole window */
.ink { position: absolute; inset: 0; z-index: 30; width: 100%; height: 100%; pointer-events: none; fill: none; stroke: #fc3838; stroke-width: 8; stroke-linecap: round; stroke-linejoin: round; }
```
